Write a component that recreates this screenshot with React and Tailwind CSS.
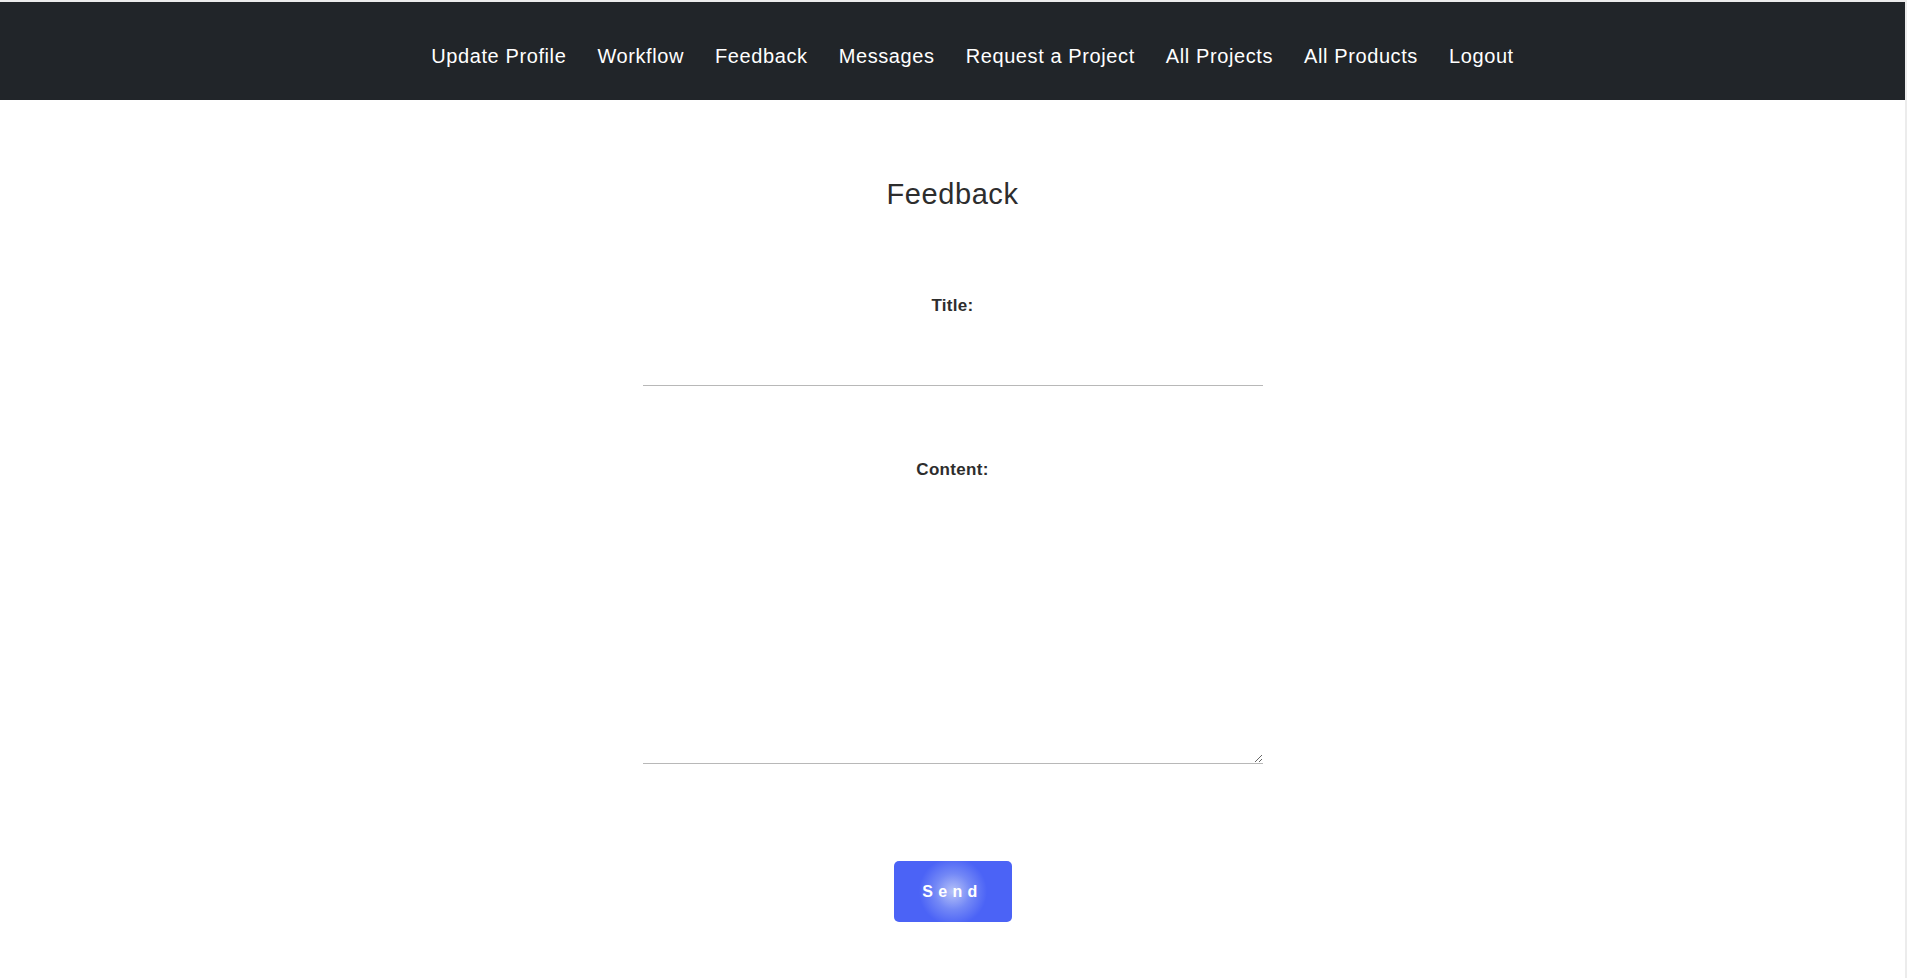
import React, { useState } from "react";

const links = [
  "Update Profile",
  "Workflow",
  "Feedback",
  "Messages",
  "Request a Project",
  "All Projects",
  "All Products",
  "Logout",
];

const App = () => {
  const [title, setTitle] = useState("");
  const [content, setContent] = useState("");

  return (
    <div className="min-h-screen bg-white border-t-2 border-r-2 border-[#ececec] font-['Liberation_Sans',Arial,sans-serif]">
      {/* top navigation */}
      <nav className="h-[98px] bg-[#212529] pt-[11px] flex items-center justify-center">
        <ul className="pl-10 flex items-center gap-[31px]">
          {links.map((l) => (
            <li key={l}>
              <a href="#" className="text-white text-[20px] leading-[24px] tracking-[0.6px]">
                {l}
              </a>
            </li>
          ))}
        </ul>
      </nav>

      <main className="flex flex-col items-center pb-10">
        <h2 className="mt-[78px] text-[29px] leading-[32px] tracking-[0.6px] text-[#2d2d2d]">
          Feedback
        </h2>

        <label className="mt-[86px] text-[17px] leading-[20px] font-bold tracking-[0.3px] text-[#2d2d2d]">
          Title:
        </label>
        <input
          type="text"
          value={title}
          onChange={(e) => setTitle(e.target.value)}
          className="mt-[30px] w-[620px] h-[40px] border-0 border-b border-[#b8b8b8] outline-none bg-white text-[16px] px-1"
        />

        <label className="mt-[74px] text-[17px] leading-[20px] font-bold tracking-[0.3px] text-[#2d2d2d]">
          Content:
        </label>
        <textarea
          value={content}
          onChange={(e) => setContent(e.target.value)}
          className="mt-[30px] w-[620px] h-[254px] border-0 border-b border-[#b8b8b8] outline-none bg-white text-[16px] p-1 resize"
        />

        <button
          type="button"
          className="mt-[97px] w-[118px] h-[61px] rounded-[5px] flex items-center justify-center text-white font-bold text-[16px] tracking-[5.3px] bg-[radial-gradient(circle_at_center,#b6c2f8_0px,#7388f6_18px,#4b63f6_34px)]"
        >
          Send
        </button>
      </main>
    </div>
  );
};

export default App;
